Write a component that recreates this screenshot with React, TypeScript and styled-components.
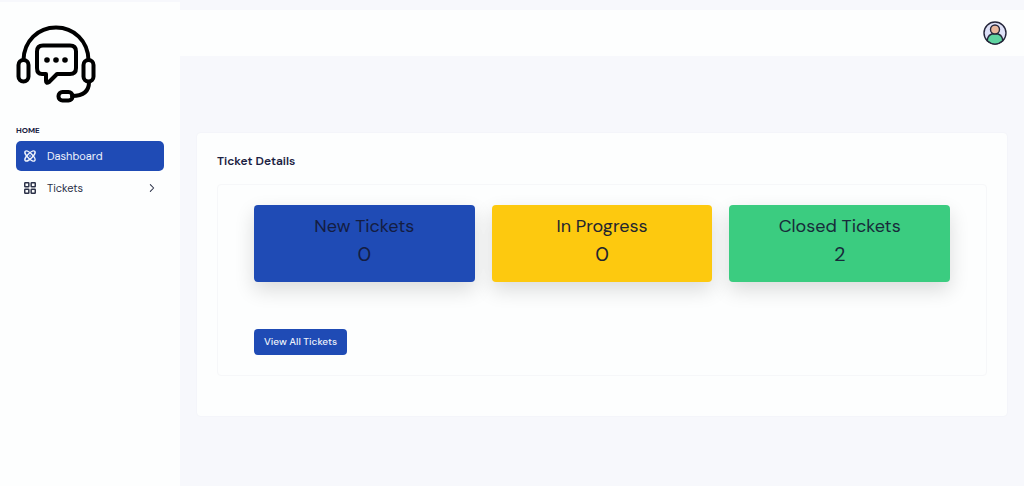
import React from "react";
import styled, { createGlobalStyle } from "styled-components";

const GlobalStyle = createGlobalStyle`
  *, *::before, *::after { box-sizing: border-box; }
  body {
    margin: 0;
    background: #f7f8fc;
    color: #1b2142;
    font-family: "DM Sans", Inter, "Open Sans", sans-serif;
    font-variation-settings: "opsz" 14;
    font-size: 11px;
    line-height: 16px;
  }
  h2, h3, p, ul { margin: 0; padding: 0; }
`;

const Page = styled.div`
  display: flex;
  min-height: 100vh;
  padding-top: 2px;
`;

const Sidebar = styled.aside`
  flex: 0 0 180px;
  padding: 22px 16px;
  background: #fdfefe;
`;

const Logo = styled.svg`
  display: block;
  width: 80px;
  height: 80px;
`;

const NavHeading = styled.h2`
  margin-top: 18px;
  font-size: 8px;
  font-weight: 700;
  line-height: 16px;
`;

const NavList = styled.ul`
  display: grid;
  gap: 2px;
  margin-top: 3px;
  list-style: none;
`;

const NavLink = styled.a<{ $active?: boolean }>`
  display: flex;
  align-items: center;
  gap: 10px;
  height: 30px;
  padding: 0 7px;
  border-radius: 5px;
  background: ${(p) => (p.$active ? "#1f4bb5" : "transparent")};
  color: ${(p) => (p.$active ? "#eef2fb" : "#2a3047")};
  text-decoration: none;
`;

const NavIcon = styled.svg`
  width: 14px;
  height: 14px;
  fill: none;
  stroke: currentColor;
  stroke-width: 2.5;
  stroke-linecap: round;
  stroke-linejoin: round;
`;

const Chevron = styled(NavIcon)`
  width: 10px;
  height: 10px;
  margin-left: auto;
`;

const Main = styled.div`
  flex: 1;
  min-width: 0;
  padding-top: 8px;
`;

const Header = styled.header`
  display: flex;
  align-items: center;
  justify-content: flex-end;
  height: 46px;
  padding: 0 17px;
  background: #fdfefe;
`;

const AvatarButton = styled.button`
  display: block;
  padding: 0;
  border: 0;
  background: none;
  line-height: 0;
`;

const Panel = styled.section`
  margin: 77px 17px 0;
  padding: 20px 20px 40px;
  border-radius: 4px;
  background: #fdfefe;
  box-shadow: 0 0 2px rgba(40, 50, 90, 0.05);
`;

const PanelTitle = styled.h2`
  font-size: 12px;
  font-weight: 600;
  line-height: 16px;
`;

const PanelBody = styled.div`
  margin-top: 15px;
  padding: 20px 36px;
  border: 1px solid #f6f7f9;
  border-radius: 4px;
`;

const Stats = styled.div`
  display: grid;
  grid-template-columns: repeat(3, 1fr);
  gap: 17px;
`;

const StatCard = styled.article<{ $color: string; $ink: string }>`
  height: 77px;
  padding-top: 7px;
  border-radius: 4px;
  background: ${(p) => p.$color};
  color: ${(p) => p.$ink};
  box-shadow: 0 8px 20px rgba(0, 0, 0, 0.14);
  text-align: center;
`;

const StatLabel = styled.h3`
  font-size: 18px;
  font-weight: 400;
  line-height: 28px;
`;

const StatValue = styled.p`
  font-size: 20px;
  line-height: 28px;
`;

const PrimaryButton = styled.button`
  display: block;
  height: 26px;
  margin-top: 47px;
  padding: 0 10px;
  border: 0;
  border-radius: 4px;
  background: #1f4bb5;
  color: #eef2fb;
  font: inherit;
  font-variation-settings: "opsz" 14;
  font-size: 10px;
  font-weight: 500;
`;

const stats = [
  { label: "New Tickets", value: 0, color: "#1f4bb5", ink: "#141d42" },
  { label: "In Progress", value: 0, color: "#fdc90f", ink: "#23252f" },
  { label: "Closed Tickets", value: 2, color: "#3bcc80", ink: "#172b3a" },
];

function SupportLogo() {
  return (
    <Logo viewBox="0 0 80 80" role="img" aria-label="Support desk" fill="none" stroke="#000" strokeWidth="4" strokeLinecap="round" strokeLinejoin="round">
      <path d="M7.500 36C8 17 22 3.500 40 3.500S72 17 72.500 36" />
      <rect x="2.500" y="36" width="10" height="21.500" rx="5" />
      <rect x="67.500" y="36" width="10" height="21.500" rx="5" />
      <path d="M73 58c0 9-5 14-17 14" />
      <rect x="42.500" y="68" width="14" height="8.500" rx="4" />
      <path d="M27 21.500h27q6 0 6 6V44q0 6-6 6H41l-8 8q-3 2-3-1v-7h-4q-5 0-5-6V27.500q0-6 6-6Z" />
      <g fill="#000" stroke="none">
        <circle cx="31" cy="36" r="2.800" />
        <circle cx="40" cy="36" r="2.800" />
        <circle cx="49" cy="36" r="2.800" />
      </g>
    </Logo>
  );
}

function Avatar() {
  return (
    <svg width="24" height="24" viewBox="0 0 24 24" stroke="#25263a" strokeWidth="1.400" aria-hidden="true">
      <circle cx="12" cy="12" r="11" fill="#dfe2f8" />
      <path d="M4.200 19.800C4.500 15 7.500 12.500 12 12.500s7.500 2.500 7.800 7.300C15 24 9 24 4.200 19.800Z" fill="#5fd3a0" />
      <circle cx="12" cy="8.500" r="4.500" fill="#e9b79c" />
    </svg>
  );
}

export default function App() {
  return (
    <>
      <GlobalStyle />
      <Page>
        <Sidebar>
          <SupportLogo />
          <NavHeading>HOME</NavHeading>
          <nav aria-label="Home">
            <NavList>
              <li>
                <NavLink href="#dashboard" $active aria-current="page">
                  <NavIcon viewBox="0 0 24 24" aria-hidden="true">
                    <path d="M20 4c-2-2-7 1-11 5s-7 9-5 11 7-1 11-5 7-9 5-11Z" />
                    <path d="M4 4c2-2 7 1 11 5s7 9 5 11-7-1-11-5S2 6 4 4Z" />
                    <path d="M12 12v.01" />
                  </NavIcon>
                  Dashboard
                </NavLink>
              </li>
              <li>
                <NavLink href="#tickets">
                  <NavIcon viewBox="0 0 24 24" aria-hidden="true">
                    <rect x="3" y="3" width="7" height="7" rx="1" />
                    <rect x="14" y="3" width="7" height="7" rx="1" />
                    <rect x="3" y="14" width="7" height="7" rx="1" />
                    <rect x="14" y="14" width="7" height="7" rx="1" />
                  </NavIcon>
                  Tickets
                  <Chevron viewBox="0 0 24 24" aria-hidden="true">
                    <path d="m8 4 8 8-8 8" />
                  </Chevron>
                </NavLink>
              </li>
            </NavList>
          </nav>
        </Sidebar>
        <Main>
          <Header>
            <AvatarButton type="button" aria-label="Account">
              <Avatar />
            </AvatarButton>
          </Header>
          <main>
            <Panel>
              <PanelTitle>Ticket Details</PanelTitle>
              <PanelBody>
                <Stats>
                  {stats.map((s) => (
                    <StatCard key={s.label} $color={s.color} $ink={s.ink}>
                      <StatLabel>{s.label}</StatLabel>
                      <StatValue>{s.value}</StatValue>
                    </StatCard>
                  ))}
                </Stats>
                <PrimaryButton type="button">View All Tickets</PrimaryButton>
              </PanelBody>
            </Panel>
          </main>
        </Main>
      </Page>
    </>
  );
}
